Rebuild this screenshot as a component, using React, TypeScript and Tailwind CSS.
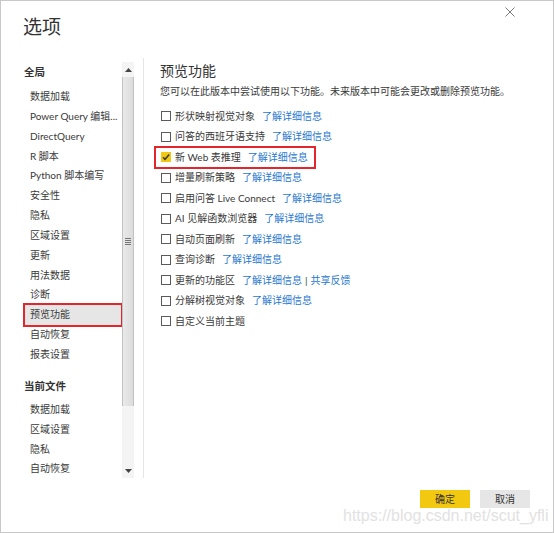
import React from "react";

const globalItems = [
  "数据加载",
  "Power Query 编辑...",
  "DirectQuery",
  "R 脚本",
  "Python 脚本编写",
  "安全性",
  "隐私",
  "区域设置",
  "更新",
  "用法数据",
  "诊断",
  "预览功能",
  "自动恢复",
  "报表设置",
];

const fileItems = ["数据加载", "区域设置", "隐私", "自动恢复"];

type Row = { label: string; link?: boolean; checked?: boolean; feedback?: boolean };

const rows: Row[] = [
  { label: "形状映射视觉对象", link: true },
  { label: "问答的西班牙语支持", link: true },
  { label: "新 Web 表推理", link: true, checked: true },
  { label: "增量刷新策略", link: true },
  { label: "启用问答 Live Connect", link: true },
  { label: "AI 见解函数浏览器", link: true },
  { label: "自动页面刷新", link: true },
  { label: "查询诊断", link: true },
  { label: "更新的功能区", link: true, feedback: true },
  { label: "分解树视觉对象", link: true },
  { label: "自定义当前主题" },
];

function Checkbox({ checked }: { checked?: boolean }) {
  if (checked) {
    return (
      <svg width="10" height="10" viewBox="0 0 10 10" className="ml-[1px] shrink-0">
        <rect x="0" y="0" width="10" height="10" fill="#F2C811" />
        <path d="M2 5.2 L4 7.3 L8.2 2.4" stroke="#3a3a3a" strokeWidth="1.5" fill="none" />
      </svg>
    );
  }
  return <div className="ml-[1px] h-[10px] w-[10px] shrink-0 border border-[#5a5a5a] bg-white" />;
}

function RowContent({ r }: { r: Row }) {
  return (
    <>
      <Checkbox checked={r.checked} />
      <span className="ml-[4px] whitespace-nowrap text-[#3a3a3a]">{r.label}</span>
      {r.link && <span className="ml-[7px] whitespace-nowrap text-[#1f77d0]">了解详细信息</span>}
      {r.feedback && (
        <>
          <span className="mx-[3px] text-[#3a3a3a]">|</span>
          <span className="whitespace-nowrap text-[#1f77d0]">共享反馈</span>
        </>
      )}
    </>
  );
}

export default function App() {
  return (
    <div className="relative h-[533px] w-[554px] overflow-hidden border border-[#c8c8c8] bg-white font-[Lato,'Noto_Sans_CJK_SC',sans-serif] text-[#3a3a3a]">
      {/* header */}
      <div className="flex h-[57px] items-start justify-between">
        <div className="pl-[22px] pt-[13px] text-[19px] leading-[26px] text-[#333]">选项</div>
        <svg width="10" height="10" viewBox="0 0 10 10" className="mr-[38px] mt-[6px]">
          <path d="M0.5 0.5 L9.5 9.5 M9.5 0.5 L0.5 9.5" stroke="#7a7a7a" strokeWidth="1" />
        </svg>
      </div>

      {/* body */}
      <div className="flex h-[420px]">
        {/* nav */}
        <div className="w-[121px] pt-[4px] text-[10px]">
          <div className="h-5 pl-[23px] text-[10.5px] font-bold leading-5 text-[#333]">全局</div>
          <div className="mt-[5px]">
            {globalItems.map((t) =>
              t === "预览功能" ? (
                <div
                  key={t}
                  className="ml-[24px] h-[19.85px] w-[96px] whitespace-nowrap bg-[#e6e6e6] pl-[5px] leading-[19.85px] outline-2 outline-[#e4252b]"
                >
                  {t}
                </div>
              ) : (
                <div key={t} className="ml-[24px] h-[19.85px] w-[96px] whitespace-nowrap pl-[5px] leading-[19.85px]">
                  {t}
                </div>
              )
            )}
          </div>
          <div className="mt-[11px] h-5 pl-[23px] text-[10.5px] font-bold leading-5 text-[#333]">当前文件</div>
          <div className="mt-[4px]">
            {fileItems.map((t, i) => (
              <div key={i} className="ml-[24px] h-[19.85px] w-[96px] whitespace-nowrap pl-[5px] leading-[19.85px]">
                {t}
              </div>
            ))}
          </div>
        </div>

        {/* scrollbar */}
        <div className="mt-[4px] flex h-[416px] w-[12px] flex-col bg-[#f4f4f4]">
          <div className="flex h-[15px] items-center justify-center">
            <svg width="7" height="4" viewBox="0 0 7 4">
              <path d="M0 4 L3.5 0 L7 4 Z" fill="#444" />
            </svg>
          </div>
          <div className="flex h-[329px] items-center justify-center border-x border-[#c2c2c2] bg-[linear-gradient(to_right,#e9e9e9,#dcdcdc)]">
            <div className="flex flex-col gap-[1px]">
              <div className="h-px w-[6px] bg-[#777]" />
              <div className="h-px w-[6px] bg-[#777]" />
              <div className="h-px w-[6px] bg-[#777]" />
              <div className="h-px w-[6px] bg-[#777]" />
            </div>
          </div>
          <div className="flex-1" />
          <div className="flex h-[15px] items-center justify-center">
            <svg width="7" height="4" viewBox="0 0 7 4">
              <path d="M0 0 L3.5 4 L7 0 Z" fill="#444" />
            </svg>
          </div>
        </div>

        {/* separator */}
        <div className="ml-[9px] w-px bg-[#e6e6e6]" />

        {/* content */}
        <div className="flex-1 pl-[16px] pt-[3px] text-[10px]">
          <div className="h-5 text-[14px] leading-5 text-[#333]">预览功能</div>
          <div className="h-5 whitespace-nowrap leading-5">您可以在此版本中尝试使用以下功能。未来版本中可能会更改或删除预览功能。</div>
          <div className="mt-[5px]">
            {rows.map((r, i) =>
              r.checked ? (
                <div
                  key={i}
                  className="-my-[1.5px] -ml-[6px] flex h-[23.5px] w-fit items-center border-2 border-[#e4252b] pl-[4px] pr-[6px]"
                >
                  <RowContent r={r} />
                </div>
              ) : (
                <div key={i} className="flex h-[20.5px] items-center">
                  <RowContent r={r} />
                </div>
              )
            )}
          </div>
        </div>
      </div>

      {/* buttons */}
      <div className="mt-[12px] flex justify-end gap-[10px] pr-[23px] text-[10px]">
        <div className="flex h-[18px] w-[50px] items-center justify-center bg-[#F2C811] text-[#333]">确定</div>
        <div className="flex h-[18px] w-[50px] items-center justify-center bg-[#e6e6e6] text-[#333]">取消</div>
      </div>

      {/* watermark */}
      <div className="pointer-events-none absolute left-[342px] top-[505px] whitespace-nowrap font-['Liberation_Sans',sans-serif] text-[16px] leading-[20px] text-[#e2e2e2]">
        https://blog.csdn.net/scut_yfli
      </div>
    </div>
  );
}
